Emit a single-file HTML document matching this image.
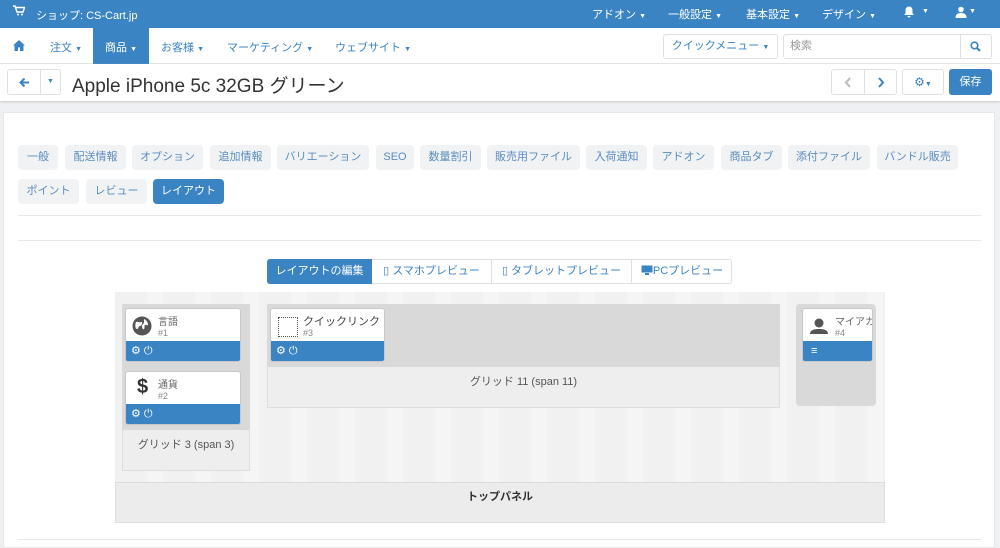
<!DOCTYPE html><html><head><meta charset="utf-8"><style>
*{box-sizing:border-box;margin:0;padding:0}
body{width:1000px;height:548px;overflow:hidden;background:#eef0f3;font-family:"Liberation Sans","Noto Sans CJK JP",sans-serif;font-size:11px;color:#333;position:relative}
.a{position:absolute}
.top{left:0;top:0;width:1000px;height:28px;background:#3b84c4;color:#fff}
.nav{left:0;top:28px;width:1000px;height:36px;background:#fff;border-bottom:1px solid #e4e6ea}
.nav span{position:absolute;top:11px;color:#3b84c4;font-size:11px}
.car{font-size:7px}
.btn{position:absolute;border:1px solid #dde1e6;background:#fff;border-radius:3px}
.tab{position:absolute;height:25px;background:#f1f2f3;border-radius:4px;color:#5a8dbf;font-size:11px;line-height:25px;text-align:center}
.card{position:absolute;background:#fff;border:1px solid #c8c8c8;border-radius:3px;overflow:hidden}
.card .b{position:absolute;left:0;bottom:0;width:100%;height:20px;background:#3b84c4;color:#fff;font-size:11px;padding-left:5px;line-height:20px}
.card .t{position:absolute;left:32px;top:4px;font-size:10px;color:#666}
.card .n{position:absolute;left:32px;top:19px;font-size:9px;color:#888}
</style></head><body>
<div class="a top">
<svg class="a" style="left:13px;top:5px" width="12" height="11" viewBox="0 0 12 11"><path d="M0 1h2l2 6h6l1.5-4.5H3" fill="none" stroke="#fff" stroke-width="1.4"/><circle cx="5" cy="9.5" r="1" fill="#fff"/><circle cx="9" cy="9.5" r="1" fill="#fff"/></svg>
<span class="a" style="left:36px;top:7px;font-size:11px">ショップ: CS-Cart.jp</span>
<span class="a" style="left:592px;top:6px">アドオン <span class="car">▼</span></span>
<span class="a" style="left:668px;top:6px">一般設定 <span class="car">▼</span></span>
<span class="a" style="left:746px;top:6px">基本設定 <span class="car">▼</span></span>
<span class="a" style="left:822px;top:6px">デザイン <span class="car">▼</span></span>
<svg class="a" style="left:903px;top:6px" width="12" height="12" viewBox="0 0 12 12"><path d="M6 0.5c-2.5 0-3.5 2-3.5 4v3L1 9h10L9.5 7.5v-3C9.5 2.5 8.5 0.5 6 0.5z M4.5 10a1.5 1.5 0 003 0z" fill="#fff"/></svg>
<span class="a car" style="left:922px;top:8px">▼</span>
<svg class="a" style="left:955px;top:6px" width="12" height="12" viewBox="0 0 12 12"><circle cx="6" cy="3.5" r="2.8" fill="#fff"/><path d="M0.5 12c0-4 2.5-5 5.5-5s5.5 1 5.5 5z" fill="#fff"/></svg>
<span class="a car" style="left:969px;top:8px">▼</span>
</div>
<div class="a nav">
<svg class="a" style="left:13px;top:12px" width="12" height="11" viewBox="0 0 12 11"><path d="M6 0L0 5.5h1.5V11h3.5V7.5h2V11h3.5V5.5H12z" fill="#3b84c4"/></svg>
<span style="left:50px">注文 <b class="car">▼</b></span>
<div class="a" style="left:93px;top:0;width:56px;height:36px;background:#3b84c4"></div>
<span style="left:105px;color:#fff">商品 <b class="car">▼</b></span>
<span style="left:161px">お客様 <b class="car">▼</b></span>
<span style="left:227px">マーケティング <b class="car">▼</b></span>
<span style="left:335px">ウェブサイト <b class="car">▼</b></span>
<div class="btn" style="left:663px;top:6px;width:115px;height:25px;color:#3b84c4;font-size:11px;line-height:23px;text-align:center">クイックメニュー <b class="car">▼</b></div>
<div class="btn" style="left:783px;top:6px;width:209px;height:25px;color:#999;line-height:23px;padding-left:6px">検索</div>
<div class="a" style="left:960px;top:6px;width:1px;height:25px;background:#dde1e6"></div>
<svg class="a" style="left:970px;top:13px" width="11" height="11" viewBox="0 0 11 11"><circle cx="4.5" cy="4.5" r="3.3" fill="none" stroke="#3b84c4" stroke-width="1.6"/><path d="M7 7l3 3" stroke="#3b84c4" stroke-width="2"/></svg>
</div>
<div class="a" style="left:0;top:64px;width:1000px;height:37px;background:#fff;box-shadow:0 1px 2px #ccc"></div>
<div class="btn" style="left:7px;top:69px;width:54px;height:26px"><div class="a" style="left:32px;top:0;width:1px;height:24px;background:#dde1e6"></div>
<svg class="a" style="left:11px;top:7px" width="11" height="11" viewBox="0 0 11 11"><path d="M10 5.5H2M5.5 1.5L1.5 5.5l4 4" fill="none" stroke="#3b84c4" stroke-width="2"/></svg>
<span class="a" style="left:39px;top:8px;color:#3b84c4;font-size:7px">▼</span></div>
<div class="a" style="left:72px;top:71px;font-size:19px;color:#333">Apple iPhone 5c 32GB グリーン</div>
<div class="btn" style="left:831px;top:69px;width:66px;height:26px"><div class="a" style="left:32px;top:0;width:1px;height:24px;background:#dde1e6"></div>
<svg class="a" style="left:12px;top:7px" width="8" height="11" viewBox="0 0 8 11"><path d="M6 1L2 5.5 6 10" fill="none" stroke="#bbb" stroke-width="2"/></svg>
<svg class="a" style="left:45px;top:7px" width="8" height="11" viewBox="0 0 8 11"><path d="M2 1l4 4.5L2 10" fill="none" stroke="#3b84c4" stroke-width="2"/></svg></div>
<div class="btn" style="left:902px;top:69px;width:42px;height:26px;color:#3b84c4;text-align:center;line-height:24px;font-size:12px">⚙<span class="car">▼</span></div>
<div class="a" style="left:949px;top:69px;width:43px;height:26px;background:#3b84c4;border-radius:3px;color:#fff;text-align:center;line-height:26px">保存</div>

<div class="a" style="left:3px;top:112px;width:992px;height:436px;background:#fff;border:1px solid #e8e8e8"></div>
<div class="tab" style="left:18px;top:145px;width:40px">一般</div>
<div class="tab" style="left:65px;top:145px;width:61px">配送情報</div>
<div class="tab" style="left:132px;top:145px;width:71px">オプション</div>
<div class="tab" style="left:210px;top:145px;width:61px">追加情報</div>
<div class="tab" style="left:277px;top:145px;width:92px">バリエーション</div>
<div class="tab" style="left:376px;top:145px;width:38px">SEO</div>
<div class="tab" style="left:420px;top:145px;width:61px">数量割引</div>
<div class="tab" style="left:487px;top:145px;width:93px">販売用ファイル</div>
<div class="tab" style="left:586px;top:145px;width:61px">入荷通知</div>
<div class="tab" style="left:653px;top:145px;width:61px">アドオン</div>
<div class="tab" style="left:721px;top:145px;width:61px">商品タブ</div>
<div class="tab" style="left:788px;top:145px;width:82px">添付ファイル</div>
<div class="tab" style="left:877px;top:145px;width:81px">バンドル販売</div>
<div class="tab" style="left:18px;top:179px;width:61px">ポイント</div>
<div class="tab" style="left:86px;top:179px;width:61px">レビュー</div>
<div class="tab" style="left:153px;top:179px;width:71px;background:#3b84c4;color:#fff">レイアウト</div>
<div class="a" style="left:18px;top:215px;width:963px;height:1px;background:#e6e8ee"></div>
<div class="a" style="left:18px;top:240px;width:963px;height:1px;background:#e6e8ee"></div>

<div class="a" style="left:267px;top:259px;width:465px;height:25px;border:1px solid #dde1e6;border-radius:3px;background:#fff"></div>
<div class="a" style="left:267px;top:259px;width:105px;height:25px;background:#3b84c4;border-radius:3px 0 0 3px;color:#fff;text-align:center;line-height:25px">レイアウトの編集</div>
<div class="a" style="left:372px;top:260px;width:120px;height:23px;border-right:1px solid #dde1e6;color:#3b84c4;text-align:center;line-height:23px">▯ スマホプレビュー</div>
<div class="a" style="left:492px;top:260px;width:140px;height:23px;border-right:1px solid #dde1e6;color:#3b84c4;text-align:center;line-height:23px">▯ タブレットプレビュー</div>
<div class="a" style="left:632px;top:260px;width:100px;height:23px;color:#3b84c4;text-align:center;line-height:23px">
<svg width="12" height="10" viewBox="0 0 12 10" style="vertical-align:-1px"><rect x="0.5" y="0.5" width="11" height="7" fill="#3b84c4"/><rect x="4" y="8" width="4" height="2" fill="#3b84c4"/></svg>PCプレビュー</div>

<div class="a" style="left:115px;top:292px;width:770px;height:231px;background:repeating-linear-gradient(90deg,#f1f1f1 0 32px,#f5f5f5 32px 48px)"></div>
<div class="a" style="left:122px;top:304px;width:128px;height:167px;background:#eee;border:1px solid #ddd"></div>
<div class="a" style="left:122px;top:304px;width:128px;height:126px;background:#d9d9d9"></div>
<div class="a" style="left:122px;top:436px;width:128px;text-align:center;color:#555;font-size:11px">グリッド 3 (span 3)</div>
<div class="a" style="left:267px;top:304px;width:513px;height:104px;background:#eee;border:1px solid #ddd"></div>
<div class="a" style="left:267px;top:304px;width:513px;height:63px;background:#d9d9d9"></div>
<div class="a" style="left:267px;top:373px;width:513px;text-align:center;color:#555;font-size:11px">グリッド 11 (span 11)</div>
<div class="a" style="left:796px;top:304px;width:80px;height:102px;background:#d9d9d9;border-radius:4px"></div>
<div class="a" style="left:115px;top:482px;width:770px;height:41px;background:#ececec;border:1px solid #ddd;text-align:center;font-weight:bold;font-size:11px;padding-top:5px">トップパネル</div>

<div class="card" style="left:125px;top:308px;width:116px;height:54px"><svg class="a" style="left:6px;top:7px" width="20" height="20" viewBox="0 0 20 20"><circle cx="10" cy="10" r="9.5" fill="#555"/><path d="M4 6c2-1 3 1 5 0s1 4-1 4-1 3-3 3-2-5-1-7zM12 3c2 1 4 3 4 6-1 1-2-1-3 0s0 3-1 4-2-1-2-3 2-2 2-4z" fill="#fff"/></svg><span class="t">言語</span><span class="n">#1</span><div class="b">⚙ ⏻</div></div>
<div class="card" style="left:125px;top:371px;width:116px;height:54px"><span class="a" style="left:11px;top:4px;font-size:20px;color:#333;font-weight:bold">$</span><span class="t">通貨</span><span class="n">#2</span><div class="b">⚙ ⏻</div></div>
<div class="card" style="left:270px;top:308px;width:115px;height:54px"><div class="a" style="left:7px;top:8px;width:20px;height:20px;border:1px dotted #555"></div><span class="t" style="font-size:11px;color:#444">クイックリンク</span><span class="n">#3</span><div class="b">⚙ ⏻</div></div>
<div class="card" style="left:802px;top:308px;width:71px;height:54px"><svg class="a" style="left:7px;top:9px" width="18" height="16" viewBox="0 0 18 16"><circle cx="9" cy="5" r="4.5" fill="#555"/><path d="M0 16c0-4 4-5 9-5s9 1 9 5z" fill="#555"/></svg><span class="t" style="white-space:nowrap">マイアカ</span><span class="n">#4</span><div class="b" style="padding-left:8px">≡</div></div>
<div class="a" style="left:18px;top:539px;width:963px;height:1px;background:#e6e8ee"></div>
</body></html>
